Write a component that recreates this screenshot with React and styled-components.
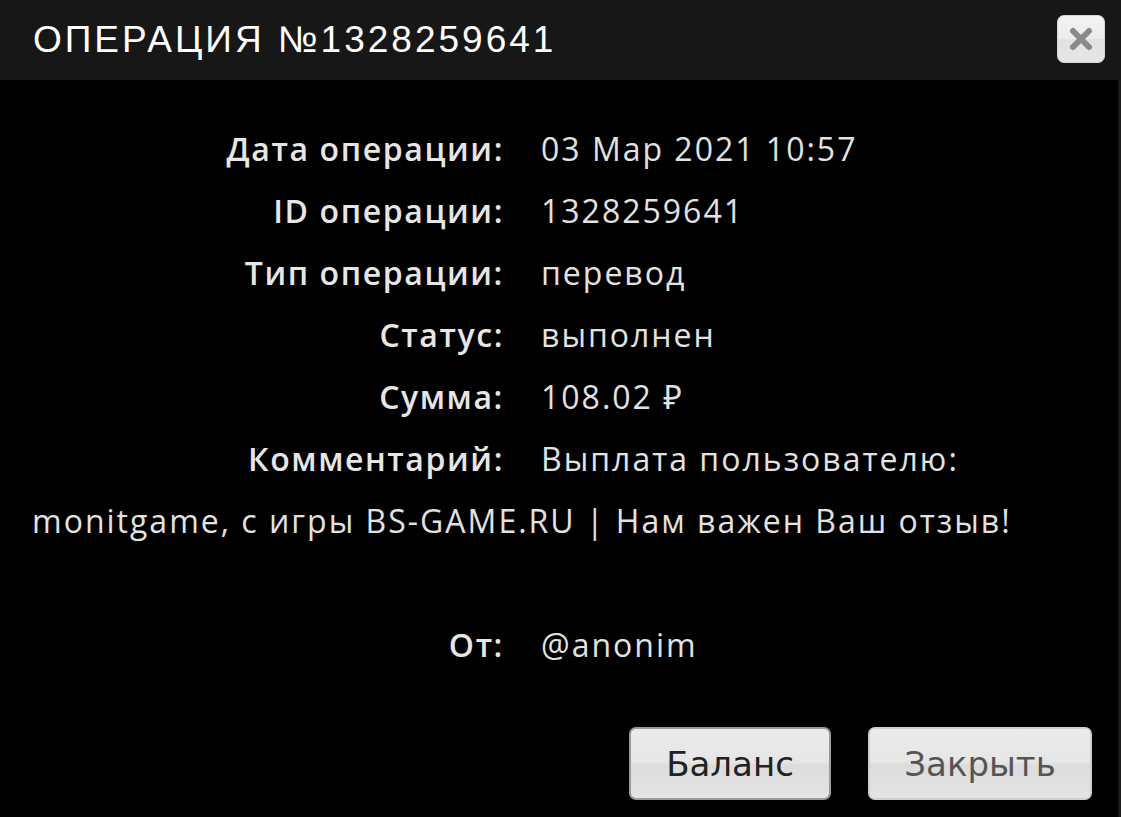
import React from "react";
import styled, { createGlobalStyle } from "styled-components";

const GlobalStyle = createGlobalStyle`
  html, body {
    margin: 0;
    padding: 0;
    background: #000;
  }
  * {
    box-sizing: border-box;
  }
`;

const Root = styled.div`
  width: 1121px;
  height: 817px;
  display: flex;
  flex-direction: column;
  background: #000;
  overflow: hidden;
`;

const Header = styled.div`
  height: 80px;
  flex: none;
  background: #171717;
  display: flex;
  align-items: center;
  justify-content: space-between;
  padding: 0 16px 0 33px;

  & > h1 {
    margin: 0;
    font-family: "Liberation Sans", Arial, sans-serif;
    font-weight: 400;
    font-size: 37px;
    letter-spacing: 3px;
    color: #fff;
  }
`;

const CloseButton = styled.button`
  width: 48px;
  height: 48px;
  margin-top: -2px;
  border: 1px solid #d6d6d6;
  border-radius: 7px;
  background: linear-gradient(#f3f3f3 0%, #ececec 50%, #e2e2e2 51%, #e6e6e6 100%);
  display: flex;
  align-items: center;
  justify-content: center;
  padding: 0;
`;

const Body = styled.div`
  flex: 1;
  background: #000;
  border-right: 3px solid #1b1b1b;
  padding: 38px 0 0 32px;
  display: flex;
  flex-direction: column;
`;

const Info = styled.div`
  font-family: "Open Sans", "Noto Sans", sans-serif;
  font-size: 32px;
  line-height: 62px;
  color: #e2e2e2;
`;

const Row = styled.div`
  margin-bottom: ${props => (props.gap ? "62px" : "0")};
`;

const Label = styled.span`
  display: inline-block;
  width: 472px;
  text-align: right;
  font-weight: 600;
  letter-spacing: 1.6px;
  margin-right: 37px;
  color: #e6e6e6;
`;

const Value = styled.span`
  font-weight: 400;
  letter-spacing: 2px;
`;

const Buttons = styled.div`
  margin-top: auto;
  margin-bottom: 17px;
  display: flex;
  justify-content: flex-end;
  gap: 37px;
  padding-right: 26px;
`;

const Button = styled.button`
  height: 73px;
  width: ${props => props.w}px;
  border-radius: 7px;
  border: 2px solid ${props => (props.primary ? "#9a9a9a" : "#cfcfcf")};
  background: linear-gradient(#ebebeb 0%, #e6e6e6 48%, #dcdcdc 52%, #e4e4e4 100%);
  font-family: "DejaVu Sans", Verdana, sans-serif;
  font-size: 34px;
  color: ${props => (props.primary ? "#222" : "#555")};
  padding: 0;
`;

const rows = [
  ["Дата операции:", "03 Мар 2021 10:57"],
  ["ID операции:", "1328259641"],
  ["Тип операции:", "перевод"],
  ["Статус:", "выполнен"],
  ["Сумма:", "108.02 ₽"],
];

const App = () => {
  return (
    <Root>
      <GlobalStyle />
      <Header>
        <h1>ОПЕРАЦИЯ №1328259641</h1>
        <CloseButton>
          <svg width="26" height="26" viewBox="0 0 26 26">
            <path d="M5 5 L21 21 M21 5 L5 21" stroke="#8a8a8a" strokeWidth="6" strokeLinecap="round" />
          </svg>
        </CloseButton>
      </Header>
      <Body>
        <Info>
          {rows.map((r, i) => (
            <Row key={i}>
              <Label>{r[0]}</Label>
              <Value>{r[1]}</Value>
            </Row>
          ))}
          <Row gap>
            <Label>Комментарий:</Label>
            <Value>Выплата пользователю: monitgame, с игры BS-GAME.RU | Нам важен Ваш отзыв!</Value>
          </Row>
          <Row>
            <Label>От:</Label>
            <Value>@anonim</Value>
          </Row>
        </Info>
        <Buttons>
          <Button primary w={202}>Баланс</Button>
          <Button w={224}>Закрыть</Button>
        </Buttons>
      </Body>
    </Root>
  );
};

export default App;
